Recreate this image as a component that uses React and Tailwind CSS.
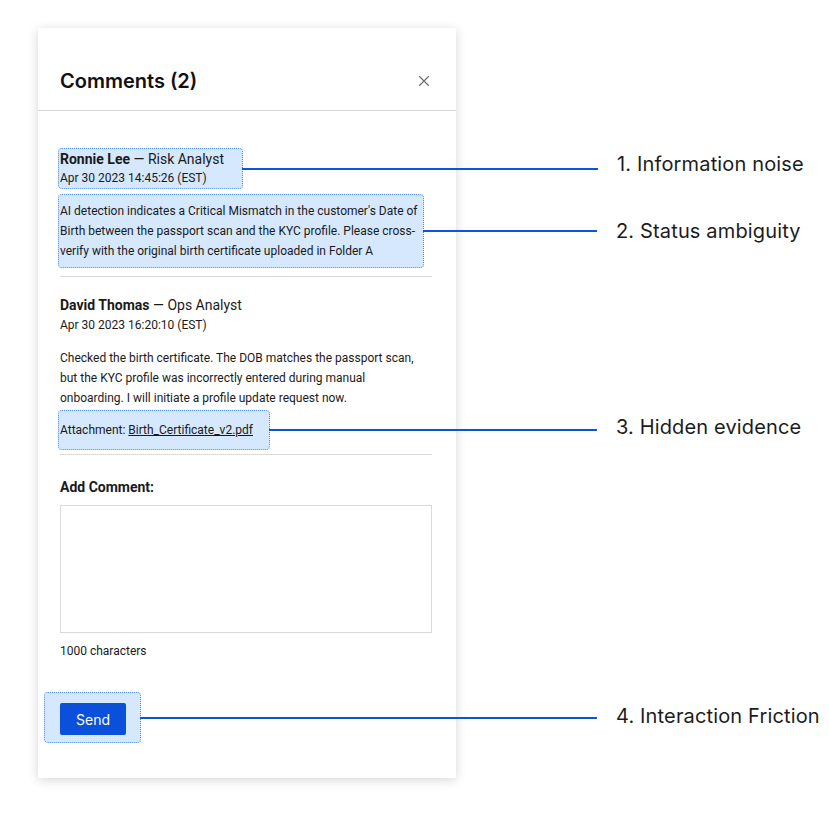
import { X } from 'lucide-react';

const Callout = ({ width, label, labelShift = 0 }) => (
    <div className="absolute left-full top-1/2 -translate-y-1/2 flex items-center pointer-events-none">
        <div className="h-[2px] bg-[#0b55d6]" style={{ width }} />
        <span
            className="ml-[19px] whitespace-nowrap text-[20px] tracking-[0.15px] text-[#1c1c1c] font-['Inter',sans-serif]"
            style={{ transform: `translateY(${labelShift}px)` }}
        >
            {label}
        </span>
    </div>
);

const Mark = ({ className = '', children }) => (
    <div className={`relative rounded-[4px] border border-dotted border-[#4b8ff0] bg-[#d5e8fd] ${className}`}>
        {children}
    </div>
);

export default function App() {
    return (
        <div className="w-[829px] h-[824px] bg-white pl-[38px] pt-[28px] font-['Roboto',sans-serif] text-[#1a1a1a]">
            <div className="w-[418px] h-[750px] bg-white shadow-[0_2px_10px_rgba(0,0,0,0.16)] flex flex-col">
                {/* Header */}
                <div className="flex items-center justify-between px-[22px] pt-[39px] pb-[15px] border-b border-[#d6d6d6]">
                    <h2 className="text-[20px] leading-[28px] font-semibold text-[#111] font-['Inter',sans-serif]">Comments (2)</h2>
                    <X className="w-[18px] h-[18px] text-[#6b6b6b] mr-[1px]" strokeWidth={1.5} />
                </div>

                <div className="pl-[22px] pr-[24px] pt-[37px] flex flex-col">
                    {/* Comment 1 */}
                    <div className="pb-[8px] border-b border-[#d9d9d9]">
                        <Mark className="inline-block -ml-[2px] pl-[1px] pr-[18px]">
                            <div className="text-[14px] leading-[20px]">
                                <span className="font-bold">Ronnie Lee</span> — Risk Analyst
                            </div>
                            <div className="text-[12px] leading-[19px]">Apr 30 2023 14:45:26 (EST)</div>
                            <Callout width={356} label="1. Information noise" labelShift={-5} />
                        </Mark>
                        <Mark className="mt-[5px] -ml-[2px] mr-[8px] pl-[1px] py-[6px] text-[12px] leading-[20px]">
                            AI detection indicates a Critical Mismatch in the customer's Date of Birth between the passport scan and the KYC profile. Please cross-verify with the original birth certificate uploaded in Folder A
                            <Callout width={174} label="2. Status ambiguity" labelShift={0} />
                        </Mark>
                    </div>

                    {/* Comment 2 */}
                    <div className="pt-[18px] pb-[4px] border-b border-[#d9d9d9]">
                        <div className="text-[14px] leading-[20px]">
                            <span className="font-bold">David Thomas</span> — Ops Analyst
                        </div>
                        <div className="text-[12px] leading-[20px]">Apr 30 2023 16:20:10 (EST)</div>
                        <p className="mt-[13px] pr-[10px] text-[12px] leading-[20px]">
                            Checked the birth certificate. The DOB matches the passport scan, but the KYC profile was incorrectly entered during manual onboarding. I will initiate a profile update request now.
                        </p>
                        <Mark className="inline-block -ml-[2px] pl-[1px] pr-[16px] py-[9px] mt-[2px] text-[12px] leading-[20px]">
                            Attachment: <span className="underline">Birth_Certificate_v2.pdf</span>
                            <Callout width={328} label="3. Hidden evidence" labelShift={-3} />
                        </Mark>
                    </div>

                    {/* Add comment */}
                    <div className="mt-[22px] text-[14px] leading-[20px] font-bold">Add Comment:</div>
                    <textarea className="mt-[8px] h-[128px] w-full border border-[#d9d9d9] resize-none outline-none" />
                    <div className="mt-[8px] text-[12px] leading-[20px]">1000 characters</div>

                    <Mark className="self-start mt-[31px] -ml-[16px] pl-[15px] pr-[14px] pt-[10px] pb-[7px]">
                        <button className="w-[66px] h-[32px] rounded-[2px] bg-[#0b50da] text-white text-[14px] font-['Inter',sans-serif]">
                            Send
                        </button>
                        <Callout width={457} label="4. Interaction Friction" labelShift={-2} />
                    </Mark>
                </div>
            </div>
        </div>
    );
}
